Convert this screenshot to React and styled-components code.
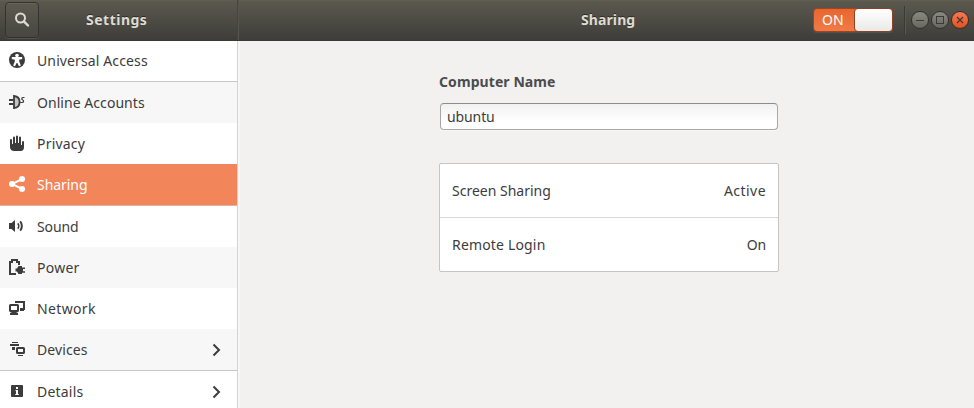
import React from "react";
import styled, { createGlobalStyle } from "styled-components";

const Global = createGlobalStyle`
  * { box-sizing: border-box; }
  body { margin: 0; background: #f2f1f0; font-family: "Noto Sans", sans-serif; font-size: 14px; color: #3c3c3c; overflow: hidden; }
`;

const Window = styled.div`
  width: 974px;
  height: 408px;
  display: flex;
  flex-direction: column;
  overflow: hidden;
`;

const HeaderBar = styled.header`
  height: 41px;
  flex: none;
  display: flex;
  align-items: center;
  color: #dfdbd2;
  background: linear-gradient(#615f50 0px, #5a584e 2px, #3e3d39 40px);
  border-bottom: 1px solid #3a3935;
`;

const HeaderLeft = styled.div`
  width: 239px;
  height: 40px;
  display: flex;
  align-items: center;
  padding-left: 5px;
  border-right: 1px solid #56544c;
  box-shadow: inset -1px 0 #45443e;
`;

const SearchButton = styled.button`
  width: 34px;
  height: 36px;
  margin: 0;
  padding: 0;
  display: grid;
  place-items: center;
  color: #dfdbd2;
  background: linear-gradient(#5c5a50, #474640);
  border: 1px solid #33322e;
  border-radius: 4px;
  box-shadow: inset 0 1px #68665b, 0 1px #55534a;
`;

const Title = styled.h1`
  margin: 0;
  font-size: 14px;
  line-height: 20px;
  font-weight: 700;
  white-space: nowrap;
  letter-spacing: ${(p) => p.$ls || 0}px;
  text-shadow: 0 -1px rgba(0, 0, 0, 0.45);
`;

const LeftTitle = styled(Title)`
  margin-left: 47px;
`;

const HeaderRight = styled.div`
  flex: 1;
  height: 40px;
  display: flex;
  align-items: center;
`;

const RightTitle = styled(Title)`
  width: 232px;
  margin-left: 342px;
  flex: none;
`;

const Toggle = styled.div`
  width: 80px;
  height: 24px;
  flex: none;
  display: flex;
  justify-content: space-between;
  border: 1px solid #a4441f;
  border-radius: 4px;
  background: linear-gradient(#e8662f, #f07b46);
  box-shadow: 0 1px rgba(255, 255, 255, 0.08);
`;

const ToggleText = styled.span`
  padding-left: 8px;
  color: #fff;
  line-height: 21px;
`;

const ToggleKnob = styled.span`
  width: 39px;
  height: 24px;
  margin: -1px -1px 0 0;
  border: 1px solid #8c4226;
  border-radius: 4px;
  background: linear-gradient(#fff, #e9e9e8);
`;

const Divider = styled.span`
  width: 2px;
  height: 28px;
  margin: 0 5px 0 11px;
  border-left: 1px solid #3b3a36;
  border-right: 1px solid #5b594f;
`;

const WindowControls = styled.div`
  display: flex;
  gap: 2px;
`;

const WindowButton = styled.span`
  width: 18px;
  height: 18px;
  display: grid;
  place-items: center;
  color: #3b3a36;
  border: 1px solid #33322e;
  border-radius: 50%;
  background: ${(p) =>
    p.$close ? "linear-gradient(#f67a50, #e4511f)" : "linear-gradient(#8b8a82, #67665f)"};
`;

const Body = styled.div`
  flex: 1;
  display: flex;
  min-height: 0;
`;

const Sidebar = styled.nav`
  width: 240px;
  flex: none;
  background: #fff;
  border-right: 2px solid #f7f7f6;
  box-shadow: inset -1px 0 #d6d4d2;
`;

const rowTones = { active: "#f3855a", alt: "#f7f7f7", plain: "#fff" };

const NavRow = styled.div`
  width: 237px;
  height: ${(p) => p.$h}px;
  display: flex;
  align-items: center;
  padding: 0 13px 0 9px;
  color: ${(p) => (p.$tone === "active" ? "#fff" : "#3c3c3c")};
  background: ${(p) => rowTones[p.$tone]};
  border-bottom: ${(p) => (p.$line ? "1px solid " + p.$line : "none")};
`;

const IconSlot = styled.span`
  width: 16px;
  height: 16px;
  align-self: flex-start;
  margin: ${(p) => p.$top}px 12px 0 0;
`;

const Label = styled.span`
  flex: 1;
  line-height: 20px;
  white-space: nowrap;
  letter-spacing: ${(p) => p.$ls || 0}px;
`;

const Svg = styled.svg`
  display: block;
`;

const Content = styled.main`
  flex: 1;
  padding: 31px 0 0 199px;
`;

const Heading = styled.h2`
  margin: 0 0 11px;
  font-size: 14px;
  line-height: 20px;
  font-weight: 700;
  color: #4c4c4c;
  white-space: nowrap;
  letter-spacing: 0.08px;
`;

const NameField = styled.input`
  display: block;
  width: 338px;
  height: 27px;
  margin-left: 1px;
  padding: 0 6px 1px;
  font: inherit;
  color: inherit;
  letter-spacing: -0.1px;
  outline: none;
  border: 1px solid #a9a6a3;
  border-top-color: #8e8c8a;
  border-radius: 4px;
  background: linear-gradient(#f1f1f1, #fff 70%);
  box-shadow: 0 1px #f8f8f7;
`;

const List = styled.section`
  width: 340px;
  margin-top: 33px;
  background: #fff;
  border: 1px solid #c7c4c2;
  border-radius: 2px;
`;

const ListRow = styled.div`
  height: ${(p) => (p.$line ? 54 : 53)}px;
  padding: 0 12px;
  display: flex;
  align-items: center;
  border-bottom: ${(p) => (p.$line ? "1px solid #dbd9d7" : "none")};
`;

const Value = styled.span`
  letter-spacing: ${(p) => p.$ls || 0}px;
`;

const Icon = ({ children }) => (
  <Svg width="16" height="16" viewBox="0 0 16 16" fill="currentColor" aria-hidden="true">
    {children}
  </Svg>
);

const AccessIcon = () => (
  <Icon>
    <circle cx="8" cy="8" r="8" />
    <circle cx="8" cy="3.5" r="1.8" fill="#fff" />
    <path d="M2.800 5h10.400v2l-3 .8v1.600l1.700 4-1.900.8L8.400 11h-.8L6 14.200l-1.900-.8 1.700-4V7.800l-3-.8z" fill="#fff" />
  </Icon>
);

const PlugIcon = () => (
  <Icon>
    <path d="M0 5h4.500v2H0zM0 9h4.500v2H0z" />
    <path d="M5 2c3.700.3 5.600 3 5.600 6s-1.900 5.700-5.600 6z" fill="#c4c4c4" stroke="currentColor" strokeWidth="1.800" />
    <path d="M15.500 3.500h-1.300c-1.700 0-1.800 1.600-.7 2.200 1.500.7 1.500 2.800-.5 2.800h-2" fill="none" stroke="currentColor" strokeWidth="1.200" />
  </Icon>
);

const HandIcon = () => (
  <Icon>
    <path d="M1 5a1 1 0 0 1 2 0v4h1V2.500a1 1 0 0 1 2 0V8h1V1.500a1 1 0 0 1 2 0V8h1V2.500a1 1 0 0 1 2 0V10h1V7a1 1 0 0 1 2 0v5c0 2.500-1 4-3.500 4h-6C2.500 16 1 14.500 1 12z" />
  </Icon>
);

const ShareIcon = () => (
  <Icon>
    <path d="M12.800 3.200 3.200 8l9.600 4.800" fill="none" stroke="currentColor" strokeWidth="2" />
    <circle cx="3" cy="8" r="3" />
    <circle cx="13" cy="3" r="3" />
    <circle cx="13" cy="13" r="3" />
  </Icon>
);

const SoundIcon = () => (
  <Icon>
    <path d="M0 5h2.500L6 2v12l-3.500-3H0z" />
    <path d="M8.700 5.300c1.300 1.400 1.300 4 0 5.400" fill="none" stroke="currentColor" strokeWidth="1.700" />
    <path d="M11.200 3.300c2.200 2.600 2.200 6.800 0 9.400" fill="none" stroke="currentColor" strokeWidth="2" />
  </Icon>
);

const PowerIcon = () => (
  <Icon>
    <path d="M7 15H1V3h2V1h5v2h2v3" fill="none" stroke="currentColor" strokeWidth="2" />
    <path d="M9.500 7H13v1.500h3V10h-2v2.200h2v1.500h-3V15H9.500L8 12.500H6.500v-3H8z" />
  </Icon>
);

const NetworkIcon = () => (
  <Icon>
    <path d="M7 3V2h8v7h-4" fill="none" stroke="currentColor" strokeWidth="2" />
    <path d="M11 8h3l1 2v1h-4z" />
    <rect x="1" y="5" width="8" height="6" rx=".6" fill="none" stroke="currentColor" strokeWidth="2" />
    <path d="M3 12h4l2 1v2H1v-2z" />
  </Icon>
);

const DevicesIcon = () => (
  <Icon>
    <path d="M3 1h6v1H3zM1 3h9v2H1zM3 6h3v3H3zM9 14h5v1H9z" />
    <rect x="8" y="7" width="7" height="5" rx=".6" fill="none" stroke="currentColor" strokeWidth="2" />
  </Icon>
);

const DetailsIcon = () => (
  <Icon>
    <rect x="2" y="2" width="12" height="12" rx="1" />
    <path d="M7 4h2v2H7zM6.500 7H9v4h.8v1H6.200v-1H7V8h-.5z" fill="#fff" />
  </Icon>
);

const Chevron = () => (
  <Icon>
    <path d="m5.500 2.500 5.500 5.500-5.500 5.500" fill="none" stroke="currentColor" strokeWidth="2" />
  </Icon>
);

const SearchIcon = () => (
  <Icon>
    <circle cx="6.500" cy="6" r="4.500" fill="none" stroke="currentColor" strokeWidth="2" />
    <path d="m9.800 9.300 4.200 4.200" stroke="currentColor" strokeWidth="2.400" strokeLinecap="round" />
  </Icon>
);

const items = [
  { name: "Universal Access", Glyph: AccessIcon, line: "#c9c7c5", ls: 0.12, top: 11 },
  { name: "Online Accounts", Glyph: PlugIcon, tone: "alt", ls: 0.05 },
  { name: "Privacy", Glyph: HandIcon, ls: 0.2 },
  { name: "Sharing", Glyph: ShareIcon, tone: "active", h: 42, line: "#d9b5a5", ls: -0.05 },
  { name: "Sound", Glyph: SoundIcon, ls: -0.1 },
  { name: "Power", Glyph: PowerIcon, tone: "alt", ls: 0.25 },
  { name: "Network", Glyph: NetworkIcon, ls: 0.35 },
  { name: "Devices", Glyph: DevicesIcon, tone: "alt", h: 42, line: "#c9c7c5", ls: 0.1, more: true },
  { name: "Details", Glyph: DetailsIcon, ls: 0.2, more: true },
];

export default function App() {
  return (
    <Window>
      <Global />
      <HeaderBar>
        <HeaderLeft>
          <SearchButton aria-label="Search">
            <SearchIcon />
          </SearchButton>
          <LeftTitle $ls={0.5}>Settings</LeftTitle>
        </HeaderLeft>
        <HeaderRight>
          <RightTitle $ls={0.1}>Sharing</RightTitle>
          <Toggle>
            <ToggleText>ON</ToggleText>
            <ToggleKnob />
          </Toggle>
          <Divider />
          <WindowControls>
            <WindowButton>
              <Icon>
                <path d="M4 8.500h8" stroke="currentColor" />
              </Icon>
            </WindowButton>
            <WindowButton>
              <Icon>
                <rect x="4.500" y="4.500" width="7" height="7" fill="none" stroke="currentColor" />
              </Icon>
            </WindowButton>
            <WindowButton $close>
              <Icon>
                <path d="m5 5 6 6m0-6-6 6" stroke="currentColor" strokeWidth="1.300" />
              </Icon>
            </WindowButton>
          </WindowControls>
        </HeaderRight>
      </HeaderBar>
      <Body>
        <Sidebar>
          {items.map(({ name, Glyph, tone = "plain", h = 41, line, ls, top = 12, more }) => (
            <NavRow key={name} $h={h} $tone={tone} $line={line}>
              <IconSlot $top={top}>
                <Glyph />
              </IconSlot>
              <Label $ls={ls}>{name}</Label>
              {more && <Chevron />}
            </NavRow>
          ))}
        </Sidebar>
        <Content>
          <Heading>Computer Name</Heading>
          <NameField defaultValue="ubuntu" aria-label="Computer Name" />
          <List>
            <ListRow $line>
              <Label>Screen Sharing</Label>
              <Value $ls={0.45}>Active</Value>
            </ListRow>
            <ListRow>
              <Label $ls={0.17}>Remote Login</Label>
              <Value $ls={-0.2}>On</Value>
            </ListRow>
          </List>
        </Content>
      </Body>
    </Window>
  );
}
